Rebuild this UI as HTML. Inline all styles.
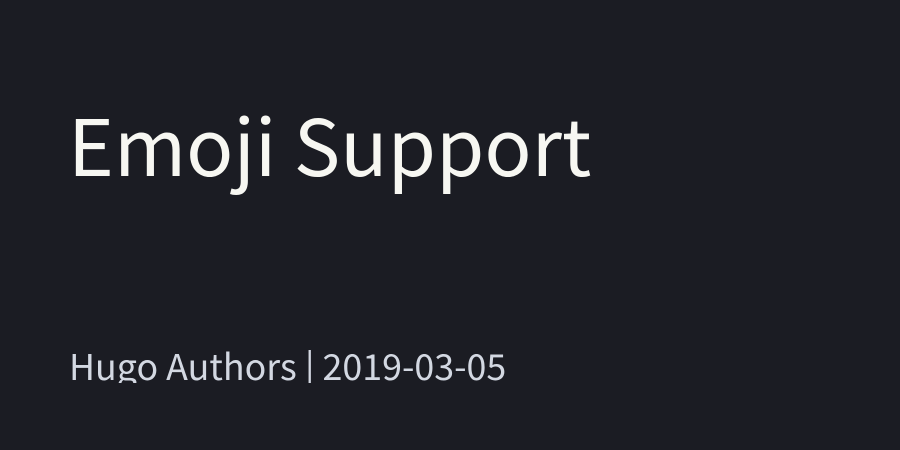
<!DOCTYPE html>
<html><head><style>
html,body{margin:0;padding:0;}
body{width:900px;height:450px;background:#1b1c23;overflow:hidden;position:relative;font-family:"Noto Sans CJK JP","Liberation Sans",sans-serif;}
.t{position:absolute;left:68px;top:89px;font-size:78px;line-height:108px;color:#f7f7f2;white-space:nowrap;}
.clip{position:absolute;left:0;top:340px;width:900px;height:43px;overflow:hidden;}
.s{position:absolute;left:69px;top:0px;font-size:35.8px;line-height:50px;color:#d3d8e2;white-space:nowrap;}
</style></head><body>
<div class="t">Emoji Support</div>
<div class="clip"><div class="s">Hugo Authors | 2019-03-05</div></div>
</body></html>
